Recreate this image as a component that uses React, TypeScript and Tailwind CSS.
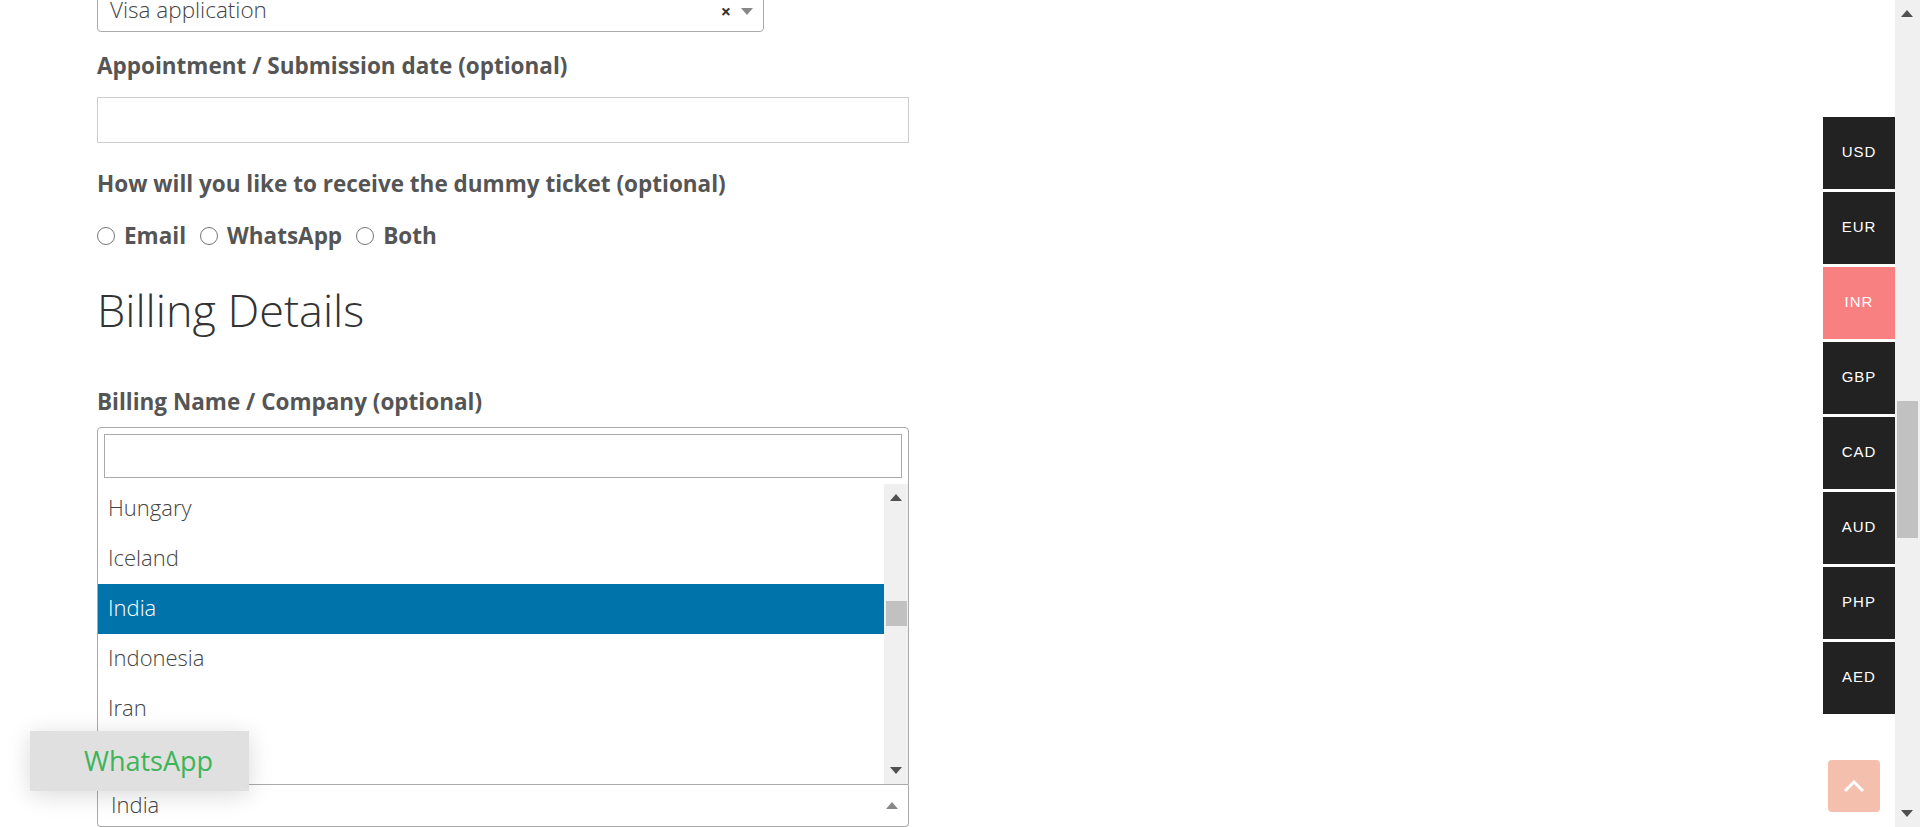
import React from 'react';

const currencies = ['USD', 'EUR', 'INR', 'GBP', 'CAD', 'AUD', 'PHP', 'AED'];
const countries = ['Hungary', 'Iceland', 'India', 'Indonesia', 'Iran', 'Iraq'];

const Radio = ({ label }: { label: string }) => (
  <label className="flex items-center gap-[9px] mr-[14px]">
    <span className="w-[18px] h-[18px] rounded-full border border-[#767676] bg-white" />
    <span>{label}</span>
  </label>
);

const Arrow = ({ up, color }: { up?: boolean; color: string }) => (
  <svg width="12" height="7" viewBox="0 0 12 7">
    <path d={up ? 'M0 7 L6 0 L12 7 Z' : 'M0 0 L12 0 L6 7 Z'} fill={color} />
  </svg>
);

const App = () => {
  return (
    <div className="relative h-[827px] w-full overflow-hidden bg-white font-['Open_Sans',sans-serif]">
      <div className="pl-[97px] w-[909px]">
        {/* purpose select, cut off at the top */}
        <div className="-mt-[10px] w-[667px] h-[42px] border border-[#aaa] rounded-[4px] flex items-center pl-[12px] pr-[10px]">
          <span className="flex-1 text-[22.5px] font-light text-[#444] pb-[2px]">Visa application</span>
          <span className="text-[18px] font-bold text-[#333] mr-[10px] leading-none">×</span>
          <Arrow color="#888" />
        </div>

        <div className="mt-[20px] text-[22.5px] leading-[28px] font-bold text-[#555]">
          Appointment / Submission date (optional)
        </div>
        <div className="mt-[17px] h-[46px] border border-[#ccc]" />

        <div className="mt-[27px] text-[22.5px] leading-[28px] font-bold text-[#555]">
          How will you like to receive the dummy ticket (optional)
        </div>
        <div className="mt-[24px] flex items-center text-[22.5px] leading-[28px] font-bold text-[#555]">
          <Radio label="Email" />
          <Radio label="WhatsApp" />
          <Radio label="Both" />
        </div>

        <h2 className="mt-[36px] text-[45px] leading-[48px] font-light text-[#333]">Billing Details</h2>

        <div className="mt-[54px] text-[22.5px] leading-[28px] font-bold text-[#555]">
          Billing Name / Company (optional)
        </div>

        {/* open country dropdown */}
        <div className="mt-[11px] border border-[#aaa] rounded-t-[4px]">
          <div className="p-[6px]">
            <div className="h-[44px] border border-[#aaa]" />
          </div>
          <div className="flex h-[300px]">
            <div className="flex-1">
              {countries.map(c => (
                <div
                  key={c}
                  className={
                    'h-[50px] flex items-center pl-[10px] pb-[3px] text-[22px] font-light ' +
                    (c === 'India' ? 'bg-[#0073aa] text-white' : 'text-[#444]')
                  }
                >
                  {c}
                </div>
              ))}
            </div>
            <div className="w-[24px] bg-[#f0f0f0] flex flex-col items-center">
              <div className="h-[26px] flex items-center justify-center">
                <Arrow up color="#505050" />
              </div>
              <div className="mt-[91px] w-[21px] h-[25px] bg-[#c1c1c1]" />
              <div className="flex-1" />
              <div className="h-[28px] flex items-center justify-center">
                <Arrow color="#505050" />
              </div>
            </div>
          </div>
        </div>
        <div className="h-[42px] border border-t-0 border-[#aaa] rounded-b-[4px] flex items-center pl-[13px] pr-[10px]">
          <span className="flex-1 text-[22px] font-light text-[#444] pb-[2px]">India</span>
          <Arrow up color="#888" />
        </div>
      </div>

      {/* whatsapp floating button */}
      <div className="absolute left-[30px] top-[731px] w-[219px] h-[60px] bg-[#e0e0e0] shadow-[0_4px_24px_rgba(0,0,0,0.15)] flex items-center pl-[54px] text-[27px] text-[#3cb55a]">
        WhatsApp
      </div>

      {/* currency switcher */}
      <div className="absolute left-[1823px] top-[117px] flex flex-col gap-[3px]">
        {currencies.map(c => (
          <div
            key={c}
            className={
              "w-[72px] h-[72px] flex items-center justify-center pb-[2px] text-[15px] tracking-[1px] text-white font-['Liberation_Sans',Arial,sans-serif] " +
              (c === 'INR' ? 'bg-[#f88080]' : 'bg-[#222]')
            }
          >
            {c}
          </div>
        ))}
      </div>

      {/* back to top */}
      <div className="absolute left-[1828px] top-[760px] w-[52px] h-[52px] rounded-[4px] bg-[#f5bfae] flex items-center justify-center">
        <svg width="22" height="13" viewBox="0 0 22 13" fill="none">
          <path d="M2 11 L11 2 L20 11" stroke="white" strokeWidth="3" />
        </svg>
      </div>

      {/* page scrollbar */}
      <div className="absolute right-0 top-0 w-[25px] h-full bg-[#f0f0f0]">
        <div className="absolute left-[6px] top-[10px]">
          <Arrow up color="#505050" />
        </div>
        <div className="absolute left-[2px] top-[401px] w-[21px] h-[137px] bg-[#c1c1c1]" />
        <div className="absolute left-[6px] top-[810px]">
          <Arrow color="#505050" />
        </div>
      </div>
    </div>
  );
};

export default App;
